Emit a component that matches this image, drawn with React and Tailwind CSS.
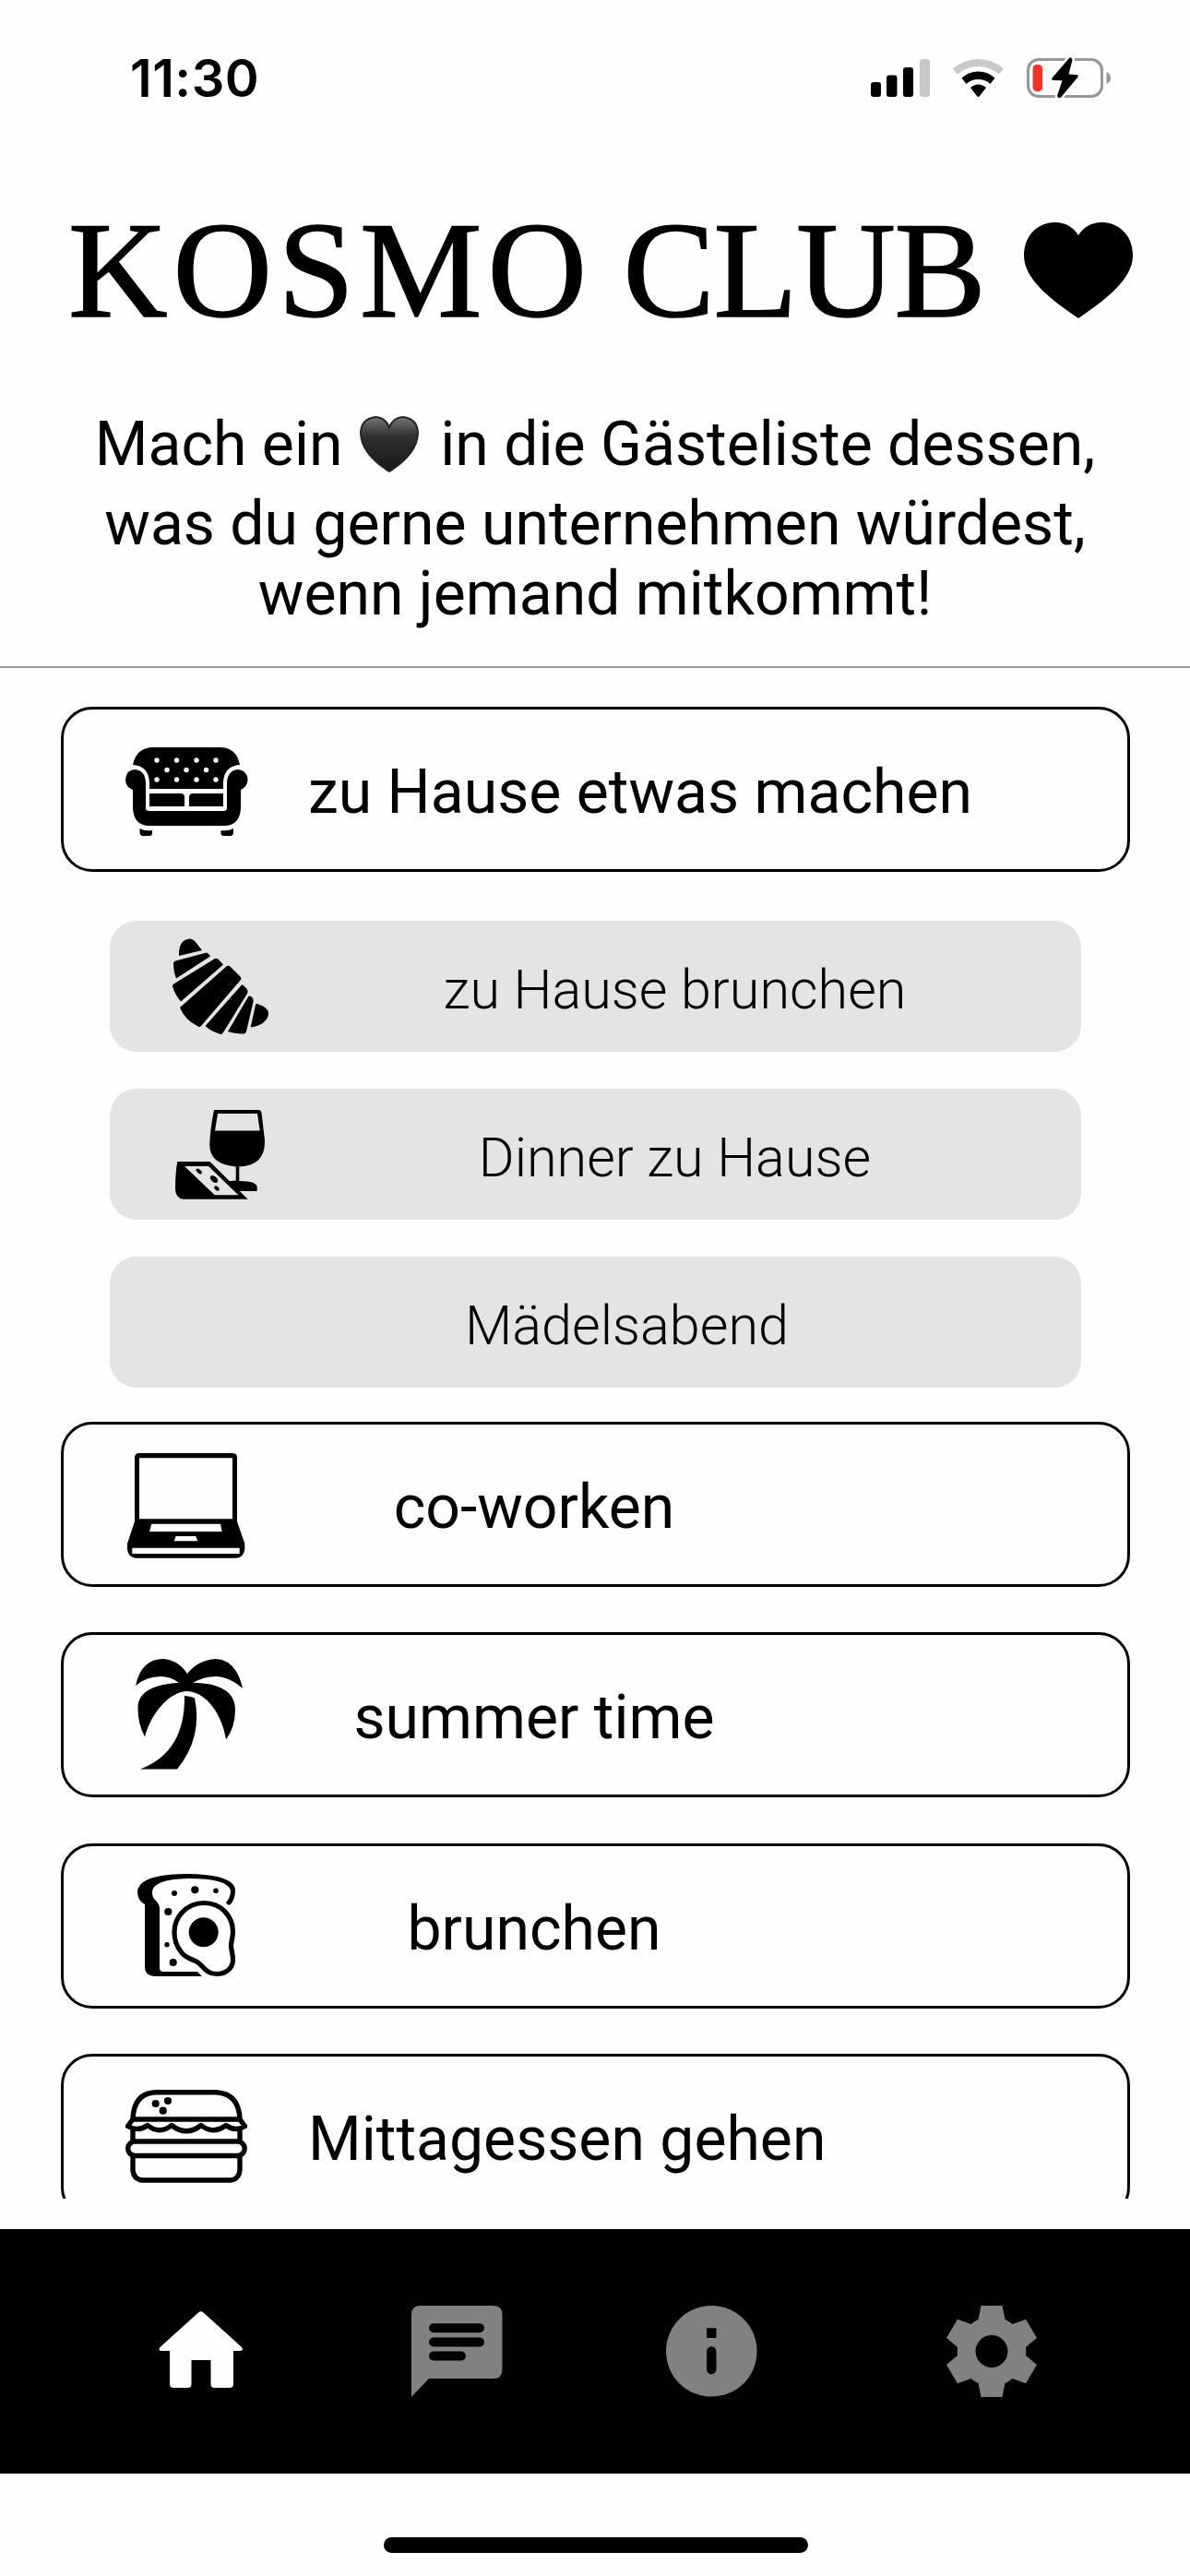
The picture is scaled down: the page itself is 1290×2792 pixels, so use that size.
import React, { useState } from 'react';

function StatusBar() {
    return (
        <div className="h-[168px] shrink-0 flex items-start justify-between pl-[141px] pr-[85px]">
            <span className="mt-[52px] font-[Inter,sans-serif] font-semibold text-[56px] leading-[66px] tracking-[0.500px]">11:30</span>
            <div className="mt-[62px] flex items-start">
                <svg width="65" height="45" viewBox="0 0 65 45">
                    <rect x="0" y="27" width="11" height="16" rx="3" />
                    <rect x="17" y="19.5" width="11.5" height="23.5" rx="3" />
                    <rect x="35" y="11" width="11" height="32" rx="3" />
                    <rect x="53" y="2" width="11" height="41" rx="3" fill="#c8c7c9" />
                </svg>
                <svg className="ml-[24px]" width="55" height="45" viewBox="0 0 55 45">
                    <path d="M0 12.5 Q12 2 27.5 2 Q43 2 55 12.5 L50 18.5 Q40 10 27.5 10 Q15 10 5 18.5Z" fill="#c8c7c9" />
                    <path d="M9.5 22.5 Q17 15.5 27.5 15.5 Q38 15.5 45.5 22.5 L40.5 29 Q35 24 27.5 24 Q20 24 14.5 29Z" />
                    <path d="M19 33 Q23 29.5 27.5 29.5 Q32 29.5 36 33 L29 42 Q27.5 44 26 42Z" />
                </svg>
                <svg className="ml-[25px]" width="92" height="46" viewBox="0 0 92 46">
                    <rect x="1.5" y="2.5" width="80" height="40" rx="11.5" fill="none" stroke="#97969a" strokeWidth="3" />
                    <path d="M86.5 16 Q91 18 91 22.5 Q91 27 86.5 29Z" fill="#97969a" />
                    <rect x="6.5" y="8" width="10.5" height="29" rx="4.5" fill="#ff3126" />
                    <path
                        d="M46 1 L27.5 22.5 Q26.5 25 29 25 L38.5 25.3 L33 42 Q34.5 46 37.5 43 L55.5 21.5 Q56 19 54 19 L45.5 18.5 L49.5 3 Q48.5 -1 46 1Z"
                        stroke="#fefefe"
                        strokeWidth="5"
                        paintOrder="stroke"
                    />
                </svg>
            </div>
        </div>
    );
}

function SofaIcon() {
    return (
        <svg className="mt-[5px]" width="133" height="96" viewBox="0 0 133 96">
            <path d="M8 19 Q12 0 30 0 H103 Q120 0 124 19 Q107 20 106 38 V45 H26 V38 Q25 20 8 19Z" />
            <path d="M26 50 H60 Q64 50 64 54 V64 H26Z M106 50 H73 Q69 50 69 54 V64 H106Z" />
            <path d="M8 46 Q0 43 0 35 Q1 24 10.5 24 Q22 25 22 40 V66 Q22 69 26 69 H106 Q110 69 110 66 V40 Q110 25 122 24 Q132 25 132.6 35 Q132 43 125 46 V66 Q124 85 107 85 H26 Q9 85 8 66Z" />
            <path d="M15.5 88 Q21 91 29 90 V93 Q29 96 26 96 H19 Q15.5 96 15.5 92Z M117 88 Q111 91 103.5 90 V93 Q103.5 96 106.5 96 H113.5 Q117 96 117 92Z" />
            <g fill="#fefefe">
                {[34, 55.5, 77, 98].map((x) => (
                    <React.Fragment key={x}>
                        <circle cx={x} cy="14" r="2.7" />
                        <circle cx={x} cy="35" r="2.7" />
                    </React.Fragment>
                ))}
                {[45, 66, 87.5].map((x) => (
                    <circle key={x} cx={x} cy="24.5" r="2.7" />
                ))}
            </g>
        </svg>
    );
}

function LaptopIcon() {
    return (
        <svg className="mt-[3px]" width="128" height="114" viewBox="0 0 128 114">
            <path
                fillRule="evenodd"
                d="M8 5 Q8 0 13 0 H114 Q119 0 119 5 V74 L127.3 98 V104 Q126 113.7 118 113.7 H9 Q1 113 0 104 V98 L8 74Z M13 5.3 V71.3 H114 V5.3Z M26.3 76.7 L24 85 H102.7 L101 76.7Z M52.7 90 L50.7 95.3 H76.3 L74.3 90Z M5.3 102.7 V109 H121.7 V102.7Z"
            />
        </svg>
    );
}

function PalmIcon() {
    return (
        <svg className="ml-[5px] -mt-[2px]" width="116" height="120" viewBox="0 0 116 120">
            <path d="M0 29 Q6 0 30 0 Q46 1 56 16 Q68 1 87 0 Q109 1 116 32 Q101 19 87 19 Q74 19 62 26 C92 26 108 36 108 55 Q108 74 98 87.5 C94 60 76 35 55 35 C37 36 17 58 10 84.5 Q2 70 2.5 52 C3 36 20 27 47 26 Q38 19 27 19 Q12 19 0 29Z" />
            <path d="M53 40 Q59 40 64 42.5 Q73 85 45 119.5 H5 Q54 101 53 40Z" />
        </svg>
    );
}

function ToastIcon() {
    return (
        <svg width="107" height="112" viewBox="0 0 107 112">
            <path d="M8 33 Q0 29 0 19 Q2 0 55 0 Q106 1 106 18 Q106 27 101 33 Q98 35 96 31 Q101 26 101 18 Q98 5 55 5 Q16 6 16 20 Q16 26 20 29 Q24 33 24 38 V102 Q24 106 28 106 H65 L70 111 H18 Q8 110 8 101Z" />
            <path
                d="M72 31.5 C91 31.5 103.5 46 103.5 63 C103.5 70 101 74 101.5 79 C102 84 103.5 87 103.5 93 C103.5 103 95 108.5 86 108.5 C74 108.5 71 99 64 95 C58 92 51 91 47 84 C42 78 40 71 40 63 C40 46 54 31.5 72 31.5Z"
                fill="none"
                stroke="black"
                strokeWidth="5.2"
            />
            <circle cx="71.7" cy="63.3" r="16" />
            <circle cx="40" cy="21" r="3" />
            <circle cx="62.3" cy="17.3" r="4.1" />
            <circle cx="85" cy="18.3" r="2.8" />
            <circle cx="33.3" cy="41" r="4.1" />
            <circle cx="32" cy="76.7" r="2.7" />
            <circle cx="38.7" cy="96" r="4.1" />
        </svg>
    );
}

function BurgerIcon() {
    return (
        <svg width="132" height="101" viewBox="0 0 132 101">
            <g fill="none" stroke="black" strokeWidth="5.4" strokeLinejoin="round">
                <path d="M8 32 Q9 3 34 2.8 H98 Q123 4 124 32Z" />
                <path d="M8 32 L2.5 39.5 Q14 46 24 38.5 Q37 49 50 38.5 Q66 51 82 38.5 Q95 49 109 38.5 Q119 46 129.5 39.5 L124 32" />
                <path d="M8 43 V56 M124 43 V56 M8 72 V87 Q9 97 18 98 H114 Q123 97 124 87 V72" />
                <rect x="2.7" y="56" width="126.5" height="15.5" rx="7.7" />
            </g>
            <circle cx="32.7" cy="15" r="4.1" />
            <circle cx="46" cy="12" r="4.1" />
            <circle cx="40.7" cy="22.7" r="4.1" />
        </svg>
    );
}

function CroissantIcon() {
    return (
        <svg width="104" height="104" viewBox="0 0 104 104">
            <path d="M7 19 V14 Q8 3 16 1 Q21 -1 25 4 L32 13Z" />
            <path d="M1 27 Q1 25 3 24.5 L37 15.5 Q40 17 41 19.5 L4 43.5 Q1 36 1 27Z" />
            <path d="M0 52 Q0 50 2 49 L46 22 Q48 21 50 23 L55 28.5 L9 68.5 Q2 60 0 52Z" />
            <path d="M8 75 L59 30 Q61 29 63 31 L73 41 Q75 43 74 45 L31 95 Q29 97 27 95 Q13 88 8 75Z" />
            <path d="M35.5 95 L75.5 50 L80 54 Q82.5 57 81 60 L55 102 Q53.5 105 51 103.5 Q42 101 35.5 95Z" />
            <path d="M60 101 L82 63.5 Q84 61 87 65 Q88 67 87.5 69 L80 101 Q79 104 76 103.5 Q67 103.5 60 101Z" />
            <path d="M84.7 96.5 L90 72 Q91 70 93 71.5 Q105 75 104 83 Q101 94 84.7 96.5Z" />
        </svg>
    );
}

function WineIcon() {
    return (
        <svg className="mt-[1px]" width="98" height="97" viewBox="0 0 98 97">
            <path
                fillRule="evenodd"
                d="M42 0 H90 Q93 0 93.5 3 L97 33 Q98 61 67.5 61.5 Q36 60 37.3 36 Q38 20 42 0Z M46 4 L43 22.5 H91.7 L89 4Z"
            />
            <path d="M65.7 60 H69.3 V77 Q88.7 77 88.7 84 V88 H68 L56 77.5 L65.7 76.5Z" />
            <path
                fillRule="evenodd"
                d="M2.3 56 H37.5 L78.7 96.8 H9 Q0 96 0 85 Q0 68 2.3 56Z M10 61 L42.7 92.3 H68.5 L36 61Z"
            />
            <ellipse cx="25.7" cy="66.5" rx="3.8" ry="2" transform="rotate(42 25.7 66.5)" />
            <ellipse cx="42" cy="75" rx="4.8" ry="2.9" transform="rotate(42 42 75)" />
            <ellipse cx="45" cy="85" rx="3.2" ry="2" transform="rotate(42 45 85)" />
        </svg>
    );
}

function HomeIcon() {
    return (
        <svg width="92" height="83" viewBox="0 0 92 83">
            <path d="M43 1.5 Q45.7 -1 48.5 1.5 L90 39 Q92.5 43 88 43 H81 V79 Q81 83 77 83 H60.5 Q56.5 83 56.5 79 V53 H35.5 V79 Q35.5 83 31.5 83 H16 Q12 83 12 79 V43 H3 Q-1 43 1.5 39Z" />
        </svg>
    );
}

function ChatIcon() {
    return (
        <svg width="99" height="99" viewBox="0 0 99 99">
            <path
                fillRule="evenodd"
                d="M9 0 H89 Q98.5 0 98.5 10 V69 Q98.5 79 89 79 H19 L0 98.7 V10 Q0 0 9 0Z M24 19.3 A5 5 0 0 0 24 29.3 H74 A5 5 0 0 0 74 19.3Z M24 34.5 A5 5 0 0 0 24 44.5 H74 A5 5 0 0 0 74 34.5Z M24 49.5 A5 5 0 0 0 24 59.5 H54 A5 5 0 0 0 54 49.5Z"
            />
        </svg>
    );
}

function InfoIcon() {
    return (
        <svg width="99" height="99" viewBox="0 0 99 99">
            <path
                fillRule="evenodd"
                d="M49.3 0 A49.3 49.3 0 0 1 49.3 98.6 A49.3 49.3 0 0 1 49.3 0Z M44 24.3 V35 H54.5 V24.3Z M44 49.5 V69 A5.25 5.25 0 0 0 54.5 69 V49.5 A5.25 5.25 0 0 0 44 49.5Z"
            />
        </svg>
    );
}

function GearIcon() {
    return (
        <svg width="98" height="99" viewBox="0 0 98 99">
            <path
                fillRule="evenodd"
                d="M37.5 0 H60.5 L63.5 15 Q68 17 71.5 20 L86 14.7 L98 35 L86 45 Q86.5 49.5 86 54 L98 64 L86 84.3 L71.5 79 Q68 82 63.5 84 L60.5 99 H37.5 L34.5 84 Q30 82 26.5 79 L12 84.3 L0 64 L12 54 Q11.5 49.5 12 45 L0 35 L12 14.7 L26.5 20 Q30 17 34.5 15Z M49 32 A17.5 17.5 0 0 0 49 67 A17.5 17.5 0 0 0 49 32Z"
            />
        </svg>
    );
}

function BlackHeart() {
    return (
        <svg className="inline-block align-[-8px] ml-[2px] mr-[7px]" width="64" height="61" viewBox="0 0 64 61">
            <defs>
                <linearGradient id="heartShine" x1="0" y1="0" x2="0" y2="1">
                    <stop offset="0" stopColor="#77767a" />
                    <stop offset="0.35" stopColor="#303033" />
                    <stop offset="1" stopColor="#18181a" />
                </linearGradient>
            </defs>
            <path
                d="M32 12 Q37 1 47 1 Q63 3 63 19 Q62 41 32 60 Q2 41 1 19 Q1 3 17 1 Q27 1 32 12Z"
                fill="url(#heartShine)"
                stroke="#242426"
                strokeWidth="2"
            />
        </svg>
    );
}

const categories = [
    {
        label: 'zu Hause etwas machen',
        icon: SofaIcon,
        children: [
            { label: 'zu Hause brunchen', icon: CroissantIcon },
            { label: 'Dinner zu Hause', icon: WineIcon },
            { label: 'Mädelsabend' },
        ],
    },
    { label: 'co-worken', icon: LaptopIcon },
    { label: 'summer time', icon: PalmIcon },
    { label: 'brunchen', icon: ToastIcon },
    { label: 'Mittagessen gehen', icon: BurgerIcon },
];

const tabs = [
    { id: 'home', icon: HomeIcon, spacing: '-mt-[4px]' },
    { id: 'chat', icon: ChatIcon, spacing: 'ml-[182px]' },
    { id: 'info', icon: InfoIcon, spacing: 'ml-[177px]' },
    { id: 'settings', icon: GearIcon, spacing: 'ml-[205px]' },
];

function CategoryCard({ label, icon: Icon }) {
    return (
        <button className="w-full h-[179px] shrink-0 flex items-center pl-[63px] border-[3.5px] border-black rounded-[34px]">
            <span className="w-[140px] flex justify-center">
                <Icon />
            </span>
            <span className="ml-[62px] mt-[7px] min-w-[490px] text-center text-[66.100px] leading-[78px] whitespace-nowrap">{label}</span>
        </button>
    );
}

function SubCard({ label, icon: Icon }) {
    return (
        <button className="h-[142px] shrink-0 flex items-center pl-[68px] pr-[140px] bg-[#e5e3e6] rounded-[29px]">
            {Icon && (
                <span className="w-[104px] flex justify-center">
                    <Icon />
                </span>
            )}
            <span className="ml-[140px] flex-1 text-center font-light text-[59.300px] leading-[70px] pt-[8px]">{label}</span>
        </button>
    );
}

export default function App() {
    const [active, setActive] = useState('home');

    return (
        <div className="w-[1290px] h-[2792px] flex flex-col overflow-hidden bg-[#fefefe] text-black font-[Roboto,sans-serif]">
            <StatusBar />

            {/* Header */}
            <header className="h-[556px] shrink-0 border-b-2 border-[#98979a]">
                <div className="h-[250px] pt-[40px] pl-[74px] pr-[62px] flex items-start justify-between">
                    <h1 className="font-['Liberation_Serif',serif] text-[149px] leading-[170px] whitespace-nowrap [-webkit-text-stroke:1.5px_black]">
                        <span className="tracking-[6px]">KOSMO</span> <span className="-ml-[4px] tracking-[-1.300px]">CLUB</span>
                    </h1>
                    <svg className="mt-[33px] shrink-0" width="118" height="104" viewBox="0 0 118 104">
                        <path d="M59 14 Q68 0 84 0 C104 0 118 15 118 36 C118 61 90 83 59 104 C28 83 0 61 0 36 C0 15 14 0 34 0 Q50 0 59 14Z" />
                    </svg>
                </div>
                <p className="pt-[26px] text-center text-[66.100px] leading-[76px] whitespace-nowrap">
                    <span className="block h-[86px]">
                        Mach ein <BlackHeart /> in die Gästeliste dessen,
                    </span>
                    <span className="block">was du gerne unternehmen würdest,</span>
                    <span className="block">wenn jemand mitkommt!</span>
                </p>
            </header>

            {/* Category list */}
            <main className="h-[1659px] shrink-0 overflow-hidden pt-[42px] pl-[66px] pr-[65px] flex flex-col gap-[49.300px]">
                {categories.map((category) => (
                    <React.Fragment key={category.label}>
                        <CategoryCard label={category.label} icon={category.icon} />
                        {category.children && (
                            <div className="mt-[3.500px] mb-[-12px] shrink-0 mx-[53px] flex flex-col gap-[40px]">
                                {category.children.map((child) => (
                                    <SubCard key={child.label} label={child.label} icon={child.icon} />
                                ))}
                            </div>
                        )}
                    </React.Fragment>
                ))}
            </main>

            {/* Bottom navigation */}
            <nav className="mt-[33px] h-[265px] shrink-0 bg-[#020002] pl-[172px] flex items-center">
                {tabs.map(({ id, icon: Icon, spacing }) => (
                    <button
                        key={id}
                        onClick={() => setActive(id)}
                        className={`${spacing} ${active === id ? 'fill-[#fefefe]' : 'fill-[#838083]'}`}
                    >
                        <Icon />
                    </button>
                ))}
            </nav>
            <div className="mt-[69px] ml-[416px] w-[460px] h-[17px] shrink-0 rounded-full bg-black" />
        </div>
    );
}
